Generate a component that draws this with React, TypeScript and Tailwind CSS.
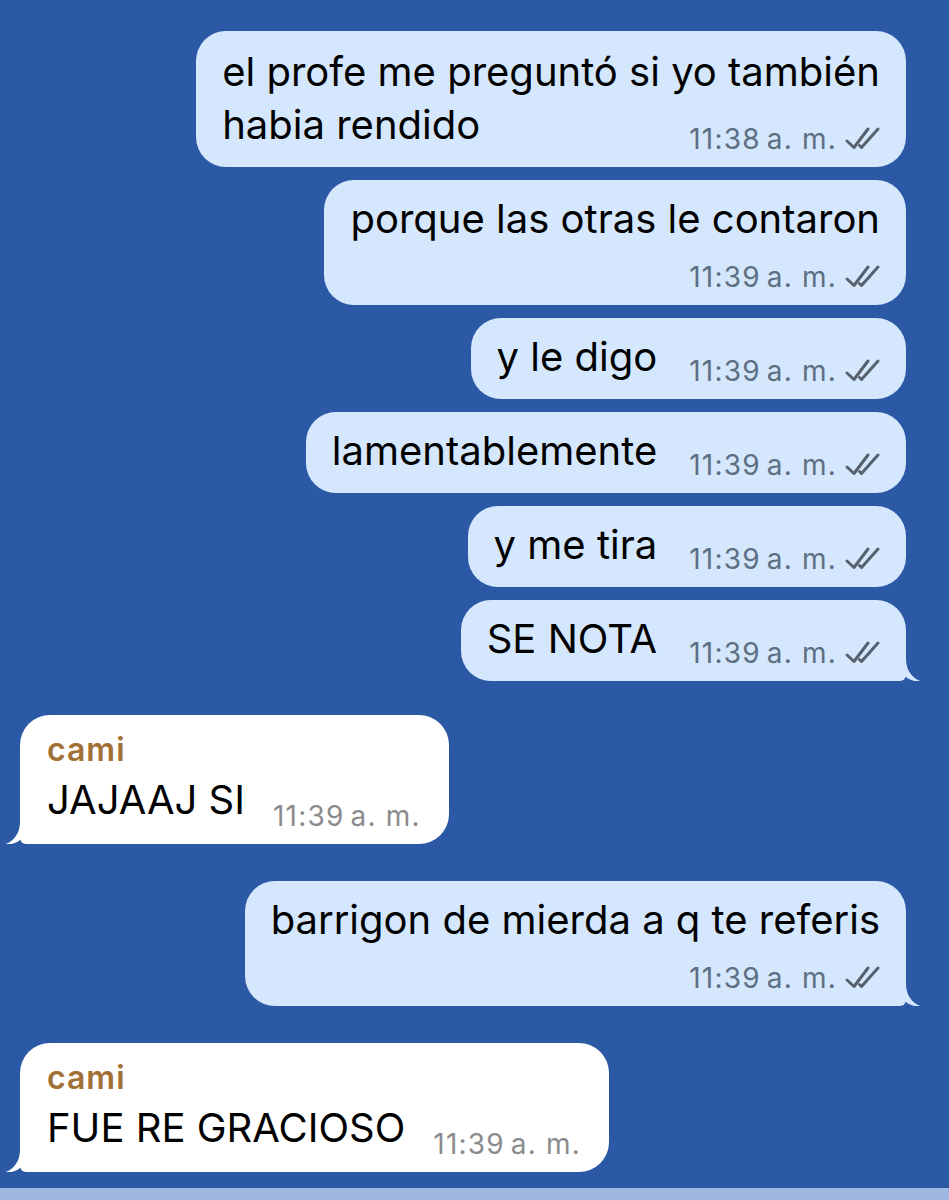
import React from "react";

type Msg = {
  side: "out" | "in";
  name?: string;
  lines: string[];
  time: string;
  layout: "inline" | "below";
  tail?: boolean;
  mt: string;
};

const msgs: Msg[] = [
  { side: "out", lines: ["el profe me preguntó si yo también", "habia rendido"], time: "11:38", layout: "inline", mt: "mt-[31px]" },
  { side: "out", lines: ["porque las otras le contaron"], time: "11:39", layout: "below", mt: "mt-[13px]" },
  { side: "out", lines: ["y le digo"], time: "11:39", layout: "inline", mt: "mt-[13px]" },
  { side: "out", lines: ["lamentablemente"], time: "11:39", layout: "inline", mt: "mt-[13px]" },
  { side: "out", lines: ["y me tira"], time: "11:39", layout: "inline", mt: "mt-[13px]" },
  { side: "out", lines: ["SE NOTA"], time: "11:39", layout: "inline", tail: true, mt: "mt-[13px]" },
  { side: "in", name: "cami", lines: ["JAJAAJ SI"], time: "11:39", layout: "inline", tail: true, mt: "mt-[34px]" },
  { side: "out", lines: ["barrigon de mierda a q te referis"], time: "11:39", layout: "below", tail: true, mt: "mt-[37px]" },
  { side: "in", name: "cami", lines: ["FUE RE GRACIOSO"], time: "11:39", layout: "inline", tail: true, mt: "mt-[37px]" },
];

function Checks() {
  return (
    <svg width="36" height="24" viewBox="0 0 36 24" className="ml-[7px] mb-[5px] shrink-0">
      <path d="M3 15 L10 21.5 L24 3" fill="none" stroke="#56616d" strokeWidth="3" strokeLinecap="round" strokeLinejoin="round" />
      <path d="M15.5 19.5 L17.5 21.5 L34 3" fill="none" stroke="#56616d" strokeWidth="3" strokeLinecap="round" strokeLinejoin="round" />
    </svg>
  );
}

function Tail({ side, color }: { side: "out" | "in"; color: string }) {
  return (
    <svg
      width="45"
      height="40"
      viewBox="0 0 45 40"
      className={
        side === "out"
          ? "absolute right-[-17px] bottom-0"
          : "absolute left-[-17px] bottom-0 -scale-x-100"
      }
    >
      <path
        d="M0 0 H28 V18 C28 30 35 38 44 40.5 C36 41 30 38.5 25.5 34 C20 38.5 13 40.5 0 40.5 Z"
        fill={color}
      />
    </svg>
  );
}

function TimeStamp({ m }: { m: Msg }) {
  const out = m.side === "out";
  return (
    <div className={"flex items-end shrink-0 " + (out ? "text-[#5d6f83]" : "text-[#8b8b8d]")}>
      <span className="text-[28px] leading-[32px] tracking-[1.2px] whitespace-nowrap">
        {m.time}
        <span className="ml-[6px]">a. m.</span>
      </span>
      {out && <Checks />}
    </div>
  );
}

function Bubble({ m }: { m: Msg }) {
  const out = m.side === "out";
  const color = out ? "#d4e7fd" : "#ffffff";
  const head = m.lines.slice(0, -1);
  const last = m.lines[m.lines.length - 1];
  return (
    <div className={"flex " + (out ? "justify-end pr-[43px]" : "justify-start pl-[20px]") + " " + m.mt}>
      <div
        className={
          "relative w-fit " +
          (out
            ? "bg-[#d4e7fd] pl-[26px] pr-[26px] pt-[13px] " + (m.layout === "inline" ? "pb-[12px] " : "pb-[12px] ")
            : "bg-white pl-[27px] pr-[28px] pt-[17px] pb-[12px] ") +
          (m.tail
            ? out
              ? "rounded-tl-[30px] rounded-tr-[30px] rounded-bl-[30px] rounded-br-[6px]"
              : "rounded-tl-[30px] rounded-tr-[30px] rounded-br-[30px] rounded-bl-[6px]"
            : "rounded-[30px]")
        }
      >
        {m.tail && <Tail side={m.side} color={color} />}
        <div className="relative">
          {m.name && (
            <div className="text-[32px] leading-[36px] font-semibold tracking-[1px] text-[#a26f36] mb-[6px]">{m.name}</div>
          )}
          {head.map((l, i) => (
            <div key={i} className="text-[40px] leading-[55px] text-black whitespace-nowrap">
              {l}
            </div>
          ))}
          {m.layout === "inline" ? (
            <div className="flex items-end justify-between">
              <div
                className={
                  "text-[40px] leading-[52px] text-black whitespace-nowrap " +
                  (out ? "pb-[4px] mr-[32px]" : "pb-[6px] mr-[28px]")
                }
              >
                {last}
              </div>
              <TimeStamp m={m} />
            </div>
          ) : (
            <>
              <div className="text-[40px] leading-[52px] text-black whitespace-nowrap">{last}</div>
              <div className="flex justify-end mt-[16px]">
                <TimeStamp m={m} />
              </div>
            </>
          )}
        </div>
      </div>
    </div>
  );
}

export default function App() {
  return (
    <div
      className="w-[949px] h-[1200px] bg-[#2b59a6] flex flex-col overflow-hidden"
      style={{ fontFamily: "Inter, 'Noto Sans', sans-serif" }}
    >
      {msgs.map((m, i) => (
        <Bubble key={i} m={m} />
      ))}
      <div className="flex-1" />
      <div className="h-[12px] bg-[#9eb8e2] shrink-0" />
    </div>
  );
}
